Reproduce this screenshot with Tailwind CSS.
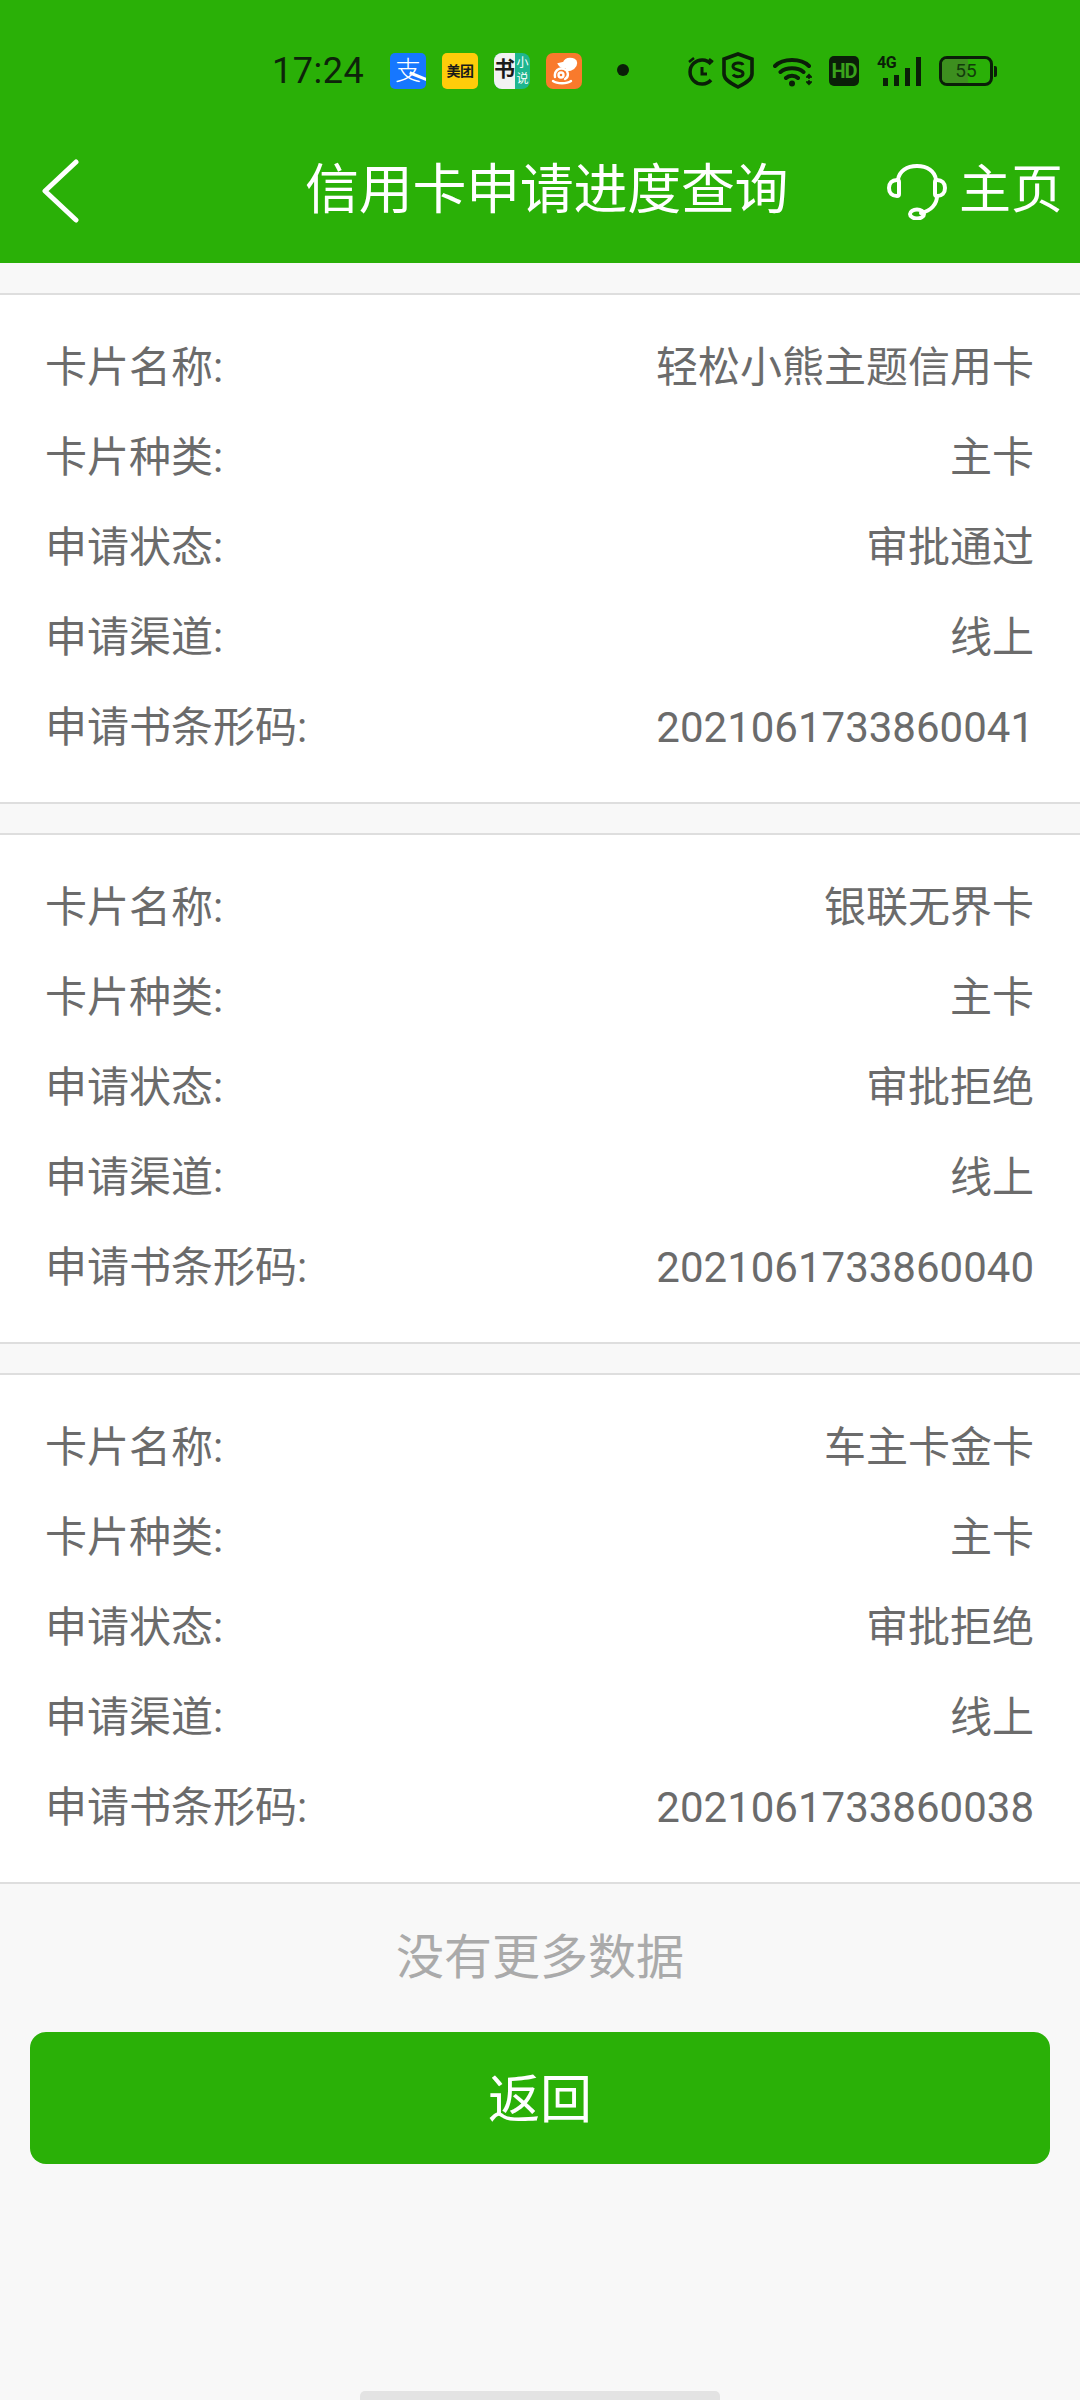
<!doctype html>
<html lang="zh"><head><meta charset="utf-8"><script src="https://cdn.jsdelivr.net/npm/@tailwindcss/browser@4"></script></head>
<body class="m-0">
<div class="w-[1080px] h-[2400px] bg-[#f8f8f8] flex flex-col overflow-hidden relative font-['Roboto','Noto_Sans_CJK_SC',sans-serif]">
<header class="h-[263px] bg-[#2ab007] flex flex-col shrink-0">
  <div class="h-[96px] pt-[53px] pl-[272px] flex items-start text-[#0d240a]">
    <span class="text-[36px] leading-[36px] w-[118px] tracking-[0.5px]">17:24</span>
    <div class="flex gap-[16px] items-center h-[36px]">
      <div class="w-[36px] h-[36px] rounded-[5px] bg-[#1677ff] text-white text-[26px] leading-[36px] text-center overflow-hidden relative font-light">支<div class="absolute left-[19px] top-[22px] w-[20px] h-[3px] bg-white rotate-[22deg]"></div></div>
      <div class="w-[36px] h-[36px] rounded-[5px] bg-[#ffcc0a] text-[#1a1a1a] text-[14px] leading-[36px] text-center font-bold tracking-[-0.5px] whitespace-nowrap">美团</div>
      <div class="w-[36px] h-[36px] rounded-[8px] overflow-hidden flex bg-[#1eb68f]">
        <div class="w-[21px] bg-[#f2f2f2] text-[#1a1a1a] text-[21px] leading-[32px] font-bold text-center whitespace-nowrap">书</div>
        <div class="w-[15px] text-white text-[12px] leading-[16px] flex flex-col items-center pt-[2px]"><span>小</span><span>说</span></div>
      </div>
      <div class="w-[36px] h-[36px] rounded-[7px] bg-[#f97a2c] flex items-center justify-center">
        <svg width="30" height="30" viewBox="0 0 30 30" fill="none" stroke="#fff" stroke-width="2.400" stroke-linecap="round"><path d="M4 25c4 3 14 3 18 0"/><path d="M6 21c-1-6 4-10 9-8 5 2 5 8 1 10"/><circle cx="12" cy="19" r="2.500"/><path d="M18 14c5 0 9-3 9-7 0-3-3-4-6-4-3 0-5 1-6 4l-5 1c1 2 3 3 5 3" fill="#fff"/></svg>
      </div>
    </div>
    <div class="w-[12px] h-[12px] rounded-full bg-[#0a1f08] ml-[35px] mt-[11px]"></div>
    <div class="flex items-start ml-[59px]">
      <svg class="mt-[3px]" width="27" height="32" viewBox="0 0 27 32" fill="none" stroke="#0a1f08" stroke-width="3.500"><path d="M23 8A12 12 0 1 0 23 24"/><path d="M14 11v7h5" stroke-width="3"/><path d="M1 6l5-4M25 6l-4-3" stroke-width="2.500"/></svg>
      <svg class="ml-[7px] -mt-[1px]" width="32" height="37" viewBox="0 0 32 37" fill="none" stroke="#0a1f08" stroke-width="3.600"><path d="M16 2 30 7v15c0 6-8 10-14 13C10 32 2 28 2 22V7z"/><path d="M21 13c-1-3-10-3-10 1.500 0 4.500 10 2.500 10 7 0 4-8 4-10 1" stroke-width="3"/></svg>
      <svg class="ml-[19px] mt-[4px]" width="41" height="30" viewBox="0 0 41 30" fill="none" stroke="#0a1f08" stroke-width="4" stroke-linecap="round"><path d="M2 9C10 1 28 1 36 9M7.500 15c6-5 17-5 23 0M13 21c3-3 9-3 12 0"/><circle cx="19" cy="26.500" r="3" fill="#0a1f08" stroke="none"/><path d="M36 18v3M34 20l2-2 2 2M36 24v3M34 25l2 2 2-2" stroke-width="2"/></svg>
      <div class="ml-[15px] mt-[3px] w-[30px] h-[30px] rounded-[5px] bg-[#0a1f08] text-[#3aa31b] text-[20px] leading-[30px] font-bold text-center tracking-[-1px]">HD</div>
      <div class="ml-[18px] mt-[3px] w-[44px] h-[30px] relative">
        <span class="absolute left-0 -top-[1px] text-[16px] leading-[16px] font-bold text-[#0a1f08] tracking-[-0.5px]">4G</span>
        <div class="absolute bottom-0 right-0 flex items-end gap-[6px]">
          <div class="w-[5px] h-[8px] bg-[#0a1f08]"></div><div class="w-[5px] h-[11px] bg-[#0a1f08]"></div><div class="w-[5px] h-[18px] bg-[#0a1f08]"></div><div class="w-[5px] h-[29px] bg-[#0a1f08]"></div>
        </div>
      </div>
      <div class="ml-[18px] mt-[3px] flex items-center">
        <div class="w-[54px] h-[30px] border-[3px] border-[#0a1f08] rounded-[8px] relative overflow-hidden text-[19px] leading-[24px] text-center text-[#123c0b]"><div class="absolute inset-y-0 left-0 w-[55%] bg-[#3d8f1f]"></div><span class="relative">55</span></div>
        <div class="w-[3px] h-[11px] bg-[#0a1f08] rounded-r-[2px] ml-[1px]"></div>
      </div>
    </div>
  </div>
  <nav class="flex-1 flex items-center text-white pt-[22px]">
    <svg class="ml-[41px] shrink-0" width="38" height="64" viewBox="0 0 38 64" fill="none" stroke="#fff" stroke-width="5" stroke-linecap="round" stroke-linejoin="round"><path d="M35 3 4 32l31 29"/></svg>
    <h1 class="ml-[226px] text-[54px] leading-[64px] font-normal whitespace-nowrap w-[490px] tracking-[-0.3px]">信用卡申请进度查询</h1>
    <svg class="ml-[92px] shrink-0 mt-[2px]" width="60" height="56" viewBox="0 0 60 56" fill="none" stroke="#fff" stroke-width="4" stroke-linecap="round"><path d="M11 16C12 7 20 2 30 2s18 5 19 14"/><path d="M10 16c-5 0-8 3-8 8s3 8 8 8c2 0 2-1 2-2V18c0-1 0-2-2-2zM50 16c5 0 8 3 8 8s-3 8-8 8c-2 0-2-1-2-2V18c0-1 0-2 2-2z"/><path d="M50 32c0 8-6 15-16 17"/><ellipse cx="30" cy="50" rx="7" ry="4.500"/></svg>
    <span class="ml-[12px] text-[52px] leading-[60px] whitespace-nowrap">主页</span>
  </nav>
</header>
<main class="pt-[30px] flex flex-col gap-[29px]">
  <section class="bg-white border-y-2 border-[#dedede] pt-[27px] pb-[30px] pl-[45px] pr-[46px] text-[42px] text-[#6b6b6b]">
    <div class="h-[90px] flex justify-between items-center"><span>卡片名称:</span><span>轻松小熊主题信用卡</span></div>
    <div class="h-[90px] flex justify-between items-center"><span>卡片种类:</span><span>主卡</span></div>
    <div class="h-[90px] flex justify-between items-center"><span>申请状态:</span><span>审批通过</span></div>
    <div class="h-[90px] flex justify-between items-center"><span>申请渠道:</span><span>线上</span></div>
    <div class="h-[90px] flex justify-between items-center"><span>申请书条形码:</span><span>2021061733860041</span></div>
  </section>
  <section class="bg-white border-y-2 border-[#dedede] pt-[27px] pb-[30px] pl-[45px] pr-[46px] text-[42px] text-[#6b6b6b]">
    <div class="h-[90px] flex justify-between items-center"><span>卡片名称:</span><span>银联无界卡</span></div>
    <div class="h-[90px] flex justify-between items-center"><span>卡片种类:</span><span>主卡</span></div>
    <div class="h-[90px] flex justify-between items-center"><span>申请状态:</span><span>审批拒绝</span></div>
    <div class="h-[90px] flex justify-between items-center"><span>申请渠道:</span><span>线上</span></div>
    <div class="h-[90px] flex justify-between items-center"><span>申请书条形码:</span><span>2021061733860040</span></div>
  </section>
  <section class="bg-white border-y-2 border-[#dedede] pt-[27px] pb-[30px] pl-[45px] pr-[46px] text-[42px] text-[#6b6b6b]">
    <div class="h-[90px] flex justify-between items-center"><span>卡片名称:</span><span>车主卡金卡</span></div>
    <div class="h-[90px] flex justify-between items-center"><span>卡片种类:</span><span>主卡</span></div>
    <div class="h-[90px] flex justify-between items-center"><span>申请状态:</span><span>审批拒绝</span></div>
    <div class="h-[90px] flex justify-between items-center"><span>申请渠道:</span><span>线上</span></div>
    <div class="h-[90px] flex justify-between items-center"><span>申请书条形码:</span><span>2021061733860038</span></div>
  </section>
</main>
<p class="h-[148px] pt-[41px] text-center text-[48px] leading-[66px] text-[#aaa]">没有更多数据</p>
<button class="mx-[30px] h-[132px] rounded-[16px] bg-[#2ab007] text-white text-[52px] pt-[6px]">返回</button>
<div class="absolute bottom-0 left-[360px] w-[360px] h-[9px] bg-[#e3e3e3] rounded-t-[5px]"></div>
</div>
</body></html>
